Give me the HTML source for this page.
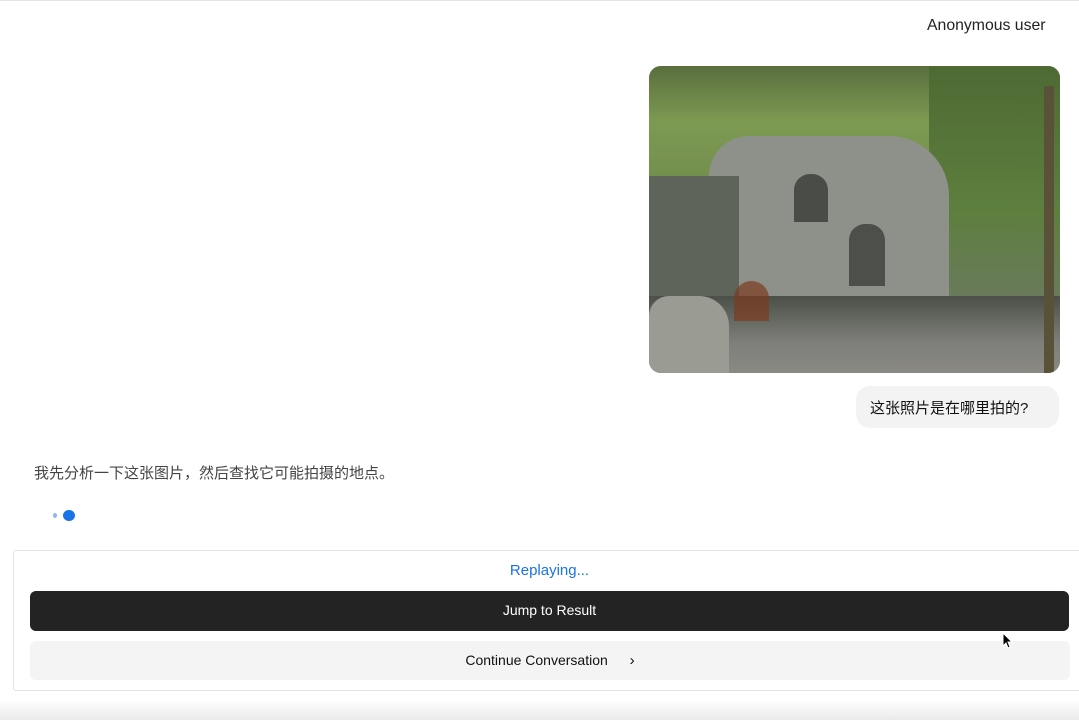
<!DOCTYPE html>
<html><head><meta charset="utf-8"><style>
*{margin:0;padding:0;box-sizing:border-box}
body{width:1079px;height:720px;background:#fff;font-family:"Liberation Sans","Noto Sans CJK SC",sans-serif;position:relative;overflow:hidden}
.abs{position:absolute}
</style></head><body>
<div class="abs" style="left:0;top:0;width:1079px;height:1px;background:#e6e6e6"></div>
<div class="abs" style="left:927px;top:17px;font-size:15.8px;color:#222">Anonymous user</div>
<div class="abs" style="left:649px;top:66px;width:411px;height:307px;border-radius:12px;overflow:hidden;background:#6d7466">
  <div class="abs" style="left:0;top:0;width:411px;height:140px;background:linear-gradient(180deg,#5a6e3e,#7d9a52 40%,#6f8a4c)"></div>
  <div class="abs" style="left:280px;top:0;width:131px;height:240px;background:linear-gradient(180deg,#4e6a34,#5d7f3e 60%,#6b7a5e)"></div>
  <div class="abs" style="left:60px;top:70px;width:240px;height:190px;background:#8e918a;border-radius:40px 60px 10px 10px"></div>
  <div class="abs" style="left:0;top:110px;width:90px;height:150px;background:#5e645a"></div>
  <div class="abs" style="left:145px;top:108px;width:34px;height:48px;background:#4a4c47;border-radius:16px 16px 0 0"></div>
  <div class="abs" style="left:200px;top:158px;width:36px;height:62px;background:#4d504a;border-radius:16px 16px 0 0"></div>
  <div class="abs" style="left:0;top:230px;width:411px;height:77px;background:linear-gradient(180deg,#4c4f48,#7e7f7a 60%,#8a8984)"></div>
  <div class="abs" style="left:0;top:230px;width:80px;height:77px;background:#9a9c94;border-radius:20px 30px 0 0"></div>
  <div class="abs" style="left:85px;top:215px;width:35px;height:40px;background:#7a3a20;border-radius:18px 18px 0 0;opacity:.7"></div>
  <div class="abs" style="left:395px;top:20px;width:10px;height:287px;background:#5a5238"></div>
</div>
<div class="abs" style="left:856px;top:386px;width:203px;height:42px;background:#f3f3f3;border-radius:14px"></div>
<div class="abs" style="left:870px;top:397px;font-size:15px;color:#111">这张照片是在哪里拍的?</div>
<div class="abs" style="left:34px;top:462px;font-size:15px;color:#444">我先分析一下这张图片，然后查找它可能拍摄的地点。</div>
<div class="abs" style="left:53px;top:513px;width:4px;height:5px;border-radius:50%;background:#8ab8f5"></div>
<div class="abs" style="left:63px;top:510px;width:12px;height:11px;border-radius:50%;background:#1a73e8"></div>
<div class="abs" style="left:13px;top:550px;width:1075px;height:141px;border:1px solid #e3e3e3;border-radius:3px;background:#fff"></div>
<div class="abs" style="left:0;top:562px;width:1099px;text-align:center;font-size:15px;color:#1a73e8">Replaying...</div>
<div class="abs" style="left:30px;top:591px;width:1039px;height:40px;background:#232323;border-radius:6px;color:#fff;font-size:14px;text-align:center;line-height:39px">Jump to Result</div>
<div class="abs" style="left:30px;top:641px;width:1040px;height:39px;background:#f4f4f4;border-radius:6px;color:#111;font-size:14px;text-align:center;line-height:38px">Continue Conversation <span style="display:inline-block;margin-left:18px;font-size:15px">&#x203A;</span></div>
<div class="abs" style="left:0;top:700px;width:1079px;height:20px;background:linear-gradient(180deg,#fff,#eaeaea)"></div>
<svg class="abs" style="left:1002px;top:632px" width="12" height="18" viewBox="0 0 12 18"><path d="M1 1 L1 14 L4 11 L6 16 L8 15 L6 10 L10 10 Z" fill="#000" stroke="#fff" stroke-width="1"/></svg>
</body></html>
